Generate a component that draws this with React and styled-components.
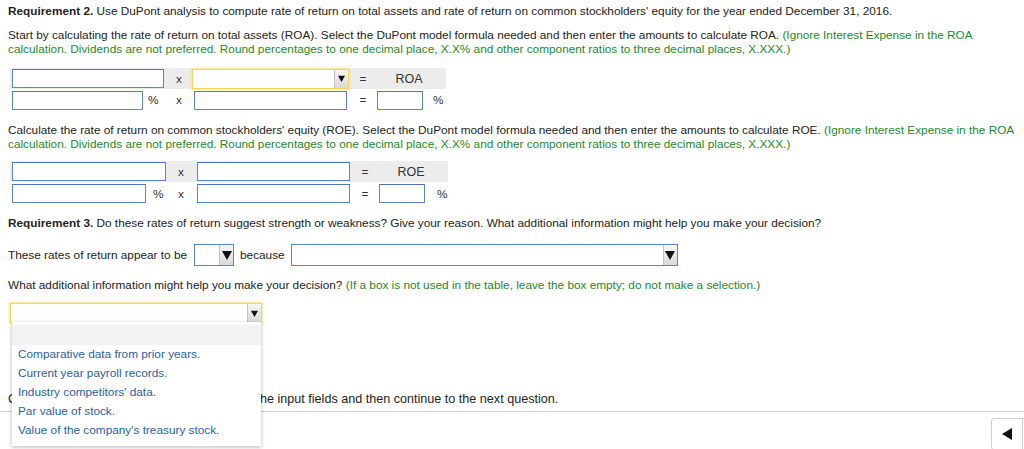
import styled, { createGlobalStyle } from "styled-components";

const GlobalStyle = createGlobalStyle`
  html, body {
    margin: 0;
    padding: 0;
    background: #fff;
  }
  body {
    font-family: "Liberation Sans", Arial, sans-serif;
    font-size: 11.8px;
    color: #222;
  }
`;

const Page = styled.div`
  width: 1024px;
  height: 449px;
  overflow: hidden;
  display: flex;
  flex-direction: column;
`;

const Content = styled.div`
  padding: 4px 8px 0;
`;

const Para = styled.p`
  margin: ${({ $mt }) => $mt || 0}px 0 0;
  line-height: 14px;
  font-size: ${({ $size }) => $size || "11.8px"};
`;

const Hint = styled.span`
  color: #23892a;
`;

const Table = styled.div`
  margin: ${({ $mt }) => $mt}px 0 0 2px;
  display: flex;
  flex-direction: column;
  align-items: flex-start;
  gap: 1px;
`;

const Row = styled.div`
  display: grid;
  width: max-content;
  grid-template-columns: ${({ $cols }) => $cols};
  height: ${({ $h }) => $h || 20}px;
  background: ${({ $shaded }) => ($shaded ? "#ececec" : "transparent")};
  align-items: center;
`;

const Cell = styled.div`
  display: flex;
  align-items: center;
  justify-content: ${({ $center }) => ($center ? "center" : "flex-start")};
  padding-left: ${({ $pl }) => $pl || 0}px;
  color: #333;
  font-size: ${({ $big }) => ($big ? "12.5px" : "11.8px")};
`;

const Input = styled.div`
  box-sizing: border-box;
  width: ${({ $w }) => $w}px;
  height: ${({ $h }) => $h || 19}px;
  border: 1px solid #5b84cf;
  border-top-color: #4a73c4;
  background: #fff;
`;

const Unit = styled.span`
  margin-left: ${({ $ml }) => $ml}px;
  color: #333;
`;

const SelectBox = styled.div`
  box-sizing: border-box;
  position: relative;
  width: ${({ $w }) => $w}px;
  height: ${({ $h }) => $h || 19}px;
  margin-left: ${({ $ml }) => $ml || 0}px;
  border: 1px solid ${({ $focus }) => ($focus ? "#f1d65a" : "#5b84cf")};
  box-shadow: ${({ $focus }) => ($focus ? "0 0 2px 1px #f8e68c" : "none")};
  background: #fff;
  display: flex;
  justify-content: flex-end;
`;

const ArrowBtn = styled.div`
  width: ${({ $w }) => $w || 13}px;
  height: 100%;
  box-sizing: border-box;
  border-left: 1px solid #c4c4c4;
  background: linear-gradient(#f6f6f6, #dadada);
  display: flex;
  align-items: center;
  justify-content: center;
`;

const Arrow = ({ size = 7 }) => (
  <svg width={size} height={size} viewBox="0 0 10 10">
    <path d="M0 1 L10 1 L5 10 Z" fill="#111" />
  </svg>
);

const Select = ({ w, h, ml, focus, btnW, arrow }) => (
  <SelectBox $w={w} $h={h} $ml={ml} $focus={focus}>
    <ArrowBtn $w={btnW}>
      <Arrow size={arrow} />
    </ArrowBtn>
  </SelectBox>
);

const InlineRow = styled.div`
  margin-top: ${({ $mt }) => $mt}px;
  display: flex;
  align-items: center;
  height: 22px;
`;

const Word = styled.span`
  margin-left: ${({ $ml }) => $ml || 0}px;
`;

const DropWrap = styled.div`
  position: relative;
  margin: 11px 0 0 2px;
  width: 252px;
`;

const Popup = styled.div`
  position: absolute;
  left: 2px;
  top: 19px;
  width: 249px;
  box-sizing: border-box;
  padding: 3px 0 6px;
  background: #fff;
  box-shadow: 0 1px 4px rgba(0, 0, 0, 0.3);
  z-index: 5;
`;

const BlankOption = styled.div`
  height: 20px;
  background: #f2f2f2;
`;

const Option = styled.div`
  height: 19px;
  line-height: 19px;
  padding-left: 6px;
  color: #2a5ea6;
`;

const Footer = styled.div`
  margin-top: 5px;
  border-top: 1px solid #c9d1dd;
  padding-top: 6px;
  display: flex;
  justify-content: flex-end;
  margin-right: -30px;
`;

const NavGroup = styled.div`
  display: flex;
  height: 30px;
  border: 1px solid #cfcfcf;
  border-radius: 3px;
  background: #fff;
`;

const NavBtn = styled.div`
  width: 30px;
  display: flex;
  align-items: center;
  justify-content: center;
  & + & {
    border-left: 1px solid #cfcfcf;
  }
`;

const options = [
  "Comparative data from prior years.",
  "Current year payroll records.",
  "Industry competitors' data.",
  "Par value of stock.",
  "Value of the company's treasury stock.",
];

const cols1 = "160px 18px 166px 18px 74px";
const cols2 = "162px 18px 166px 18px 74px";

export default function App() {
  return (
    <Page>
      <GlobalStyle />
      <Content>
        <Para>
          <b>Requirement 2.</b> Use DuPont analysis to compute rate of return on
          total assets and rate of return on common stockholders' equity for the
          year ended December 31, 2016.
        </Para>
        <Para $mt={10}>
          Start by calculating the rate of return on total assets (ROA). Select
          the DuPont model formula needed and then enter the amounts to
          calculate ROA.{" "}
          <Hint>
            (Ignore Interest Expense in the ROA calculation. Dividends are not
            preferred. Round percentages to one decimal place, X.X% and other
            component ratios to three decimal places, X.XXX.)
          </Hint>
        </Para>

        <Table $mt={12}>
          <Row $cols={cols1} $h={21} $shaded>
            <Cell $pl={2}>
              <Input $w={152} />
            </Cell>
            <Cell $center>x</Cell>
            <Cell $pl={4}>
              <Select w={157} h={20} focus btnW={14} arrow={7} />
            </Cell>
            <Cell $center>=</Cell>
            <Cell $center $big>
              ROA
            </Cell>
          </Row>
          <Row $cols={cols1}>
            <Cell $pl={2}>
              <Input $w={131} />
              <Unit $ml={5}>%</Unit>
            </Cell>
            <Cell $center>x</Cell>
            <Cell $pl={6}>
              <Input $w={153} />
            </Cell>
            <Cell $center>=</Cell>
            <Cell $pl={5}>
              <Input $w={46} />
              <Unit $ml={10}>%</Unit>
            </Cell>
          </Row>
        </Table>

        <Para $mt={13}>
          Calculate the rate of return on common stockholders' equity (ROE).
          Select the DuPont model formula needed and then enter the amounts to
          calculate ROE.{" "}
          <Hint>
            (Ignore Interest Expense in the ROA calculation. Dividends are not
            preferred. Round percentages to one decimal place, X.X% and other
            component ratios to three decimal places, X.XXX.)
          </Hint>
        </Para>

        <Table $mt={10}>
          <Row $cols={cols2} $h={21} $shaded>
            <Cell $pl={2}>
              <Input $w={154} />
            </Cell>
            <Cell $center>x</Cell>
            <Cell $pl={7}>
              <Input $w={153} />
            </Cell>
            <Cell $center>=</Cell>
            <Cell $center $big>
              ROE
            </Cell>
          </Row>
          <Row $cols={cols2} $h={21}>
            <Cell $pl={2}>
              <Input $w={134} />
              <Unit $ml={7}>%</Unit>
            </Cell>
            <Cell $center>x</Cell>
            <Cell $pl={7}>
              <Input $w={153} />
            </Cell>
            <Cell $center>=</Cell>
            <Cell $pl={5}>
              <Input $w={46} />
              <Unit $ml={12}>%</Unit>
            </Cell>
          </Row>
        </Table>

        <Para $mt={12}>
          <b>Requirement 3.</b> Do these rates of return suggest strength or
          weakness? Give your reason. What additional information might help
          you make your decision?
        </Para>

        <InlineRow $mt={14}>
          <Word>These rates of return appear to be</Word>
          <Select w={40} h={22} ml={7} btnW={14} arrow={10} />
          <Word $ml={6}>because</Word>
          <Select w={387} h={22} ml={6} btnW={14} arrow={10} />
        </InlineRow>

        <Para $mt={12}>
          What additional information might help you make your decision?{" "}
          <Hint>
            (If a box is not used in the table, leave the box empty; do not make
            a selection.)
          </Hint>
        </Para>

        <DropWrap>
          <Select w={252} h={20} focus btnW={14} arrow={7} />
          <Popup>
            <BlankOption />
            {options.map((o) => (
              <Option key={o}>{o}</Option>
            ))}
          </Popup>
        </DropWrap>

        <Para $mt={69} $size="12.6px">
          Choose from any list or enter any number in the input fields and then
          continue to the next question.
        </Para>
      </Content>

      <Footer>
        <NavGroup>
          <NavBtn>
            <svg width="10" height="12" viewBox="0 0 10 12">
              <path d="M10 0 L10 12 L0 6 Z" fill="#111" />
            </svg>
          </NavBtn>
          <NavBtn />
        </NavGroup>
      </Footer>
    </Page>
  );
}
